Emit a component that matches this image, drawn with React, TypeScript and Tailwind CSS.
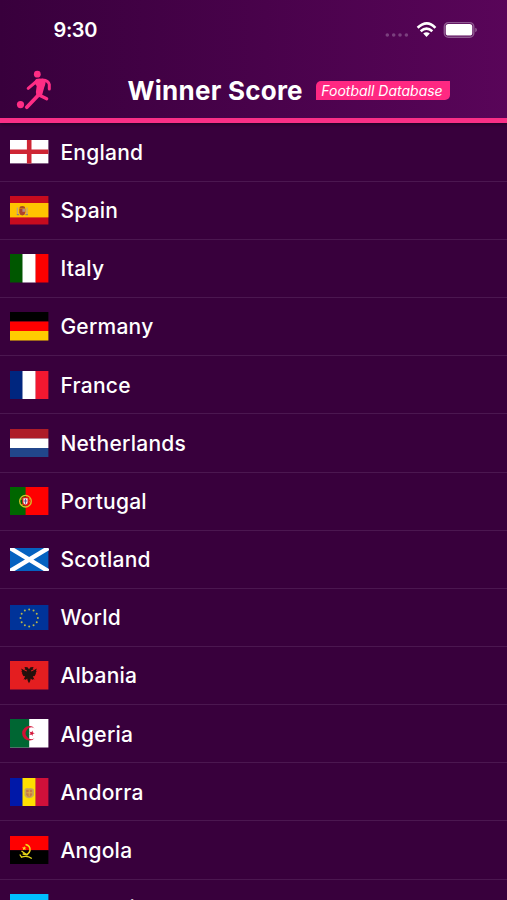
import React from 'react';

interface Country {
  name: string;
  flag: React.ReactNode;
  height?: number;
}

const HStripes = ({ colors }: { colors: string[] }) => (
  <>
    {colors.map((c, i) => (
      <rect key={i} x="0" y={(i * 28.5) / colors.length} width="38.4" height={28.5 / colors.length + 0.02} fill={c} />
    ))}
  </>
);

const VStripes = ({ colors }: { colors: string[] }) => (
  <>
    <rect x="0" y="0" width="12.9" height="28.5" fill={colors[0]} />
    <rect x="12.5" y="0" width="13.3" height="28.5" fill={colors[1]} />
    <rect x="25.6" y="0" width="12.8" height="28.5" fill={colors[2]} />
  </>
);

// 12 stars around the centre of the EU flag
const stars = Array.from({ length: 12 }, (_, i) => {
  const a = (i * Math.PI) / 6;
  return { x: 19.2 + Math.sin(a) * 8.7, y: 12.9 - Math.cos(a) * 8.5 };
});

const countries: Country[] = [
  {
    name: 'England',
    height: 23.4,
    flag: (
      <>
        <rect width="38.4" height="23.4" fill="#fff" />
        <path d="M19.2 0V23.4M0 11.8H38.4" stroke="#ce2634" strokeWidth="4.6" />
      </>
    ),
  },
  {
    name: 'Spain',
    flag: (
      <>
        <rect width="38.4" height="28.5" fill="#c60b1e" />
        <rect y="7" width="38.4" height="14.4" fill="#ffc400" />
        <path d="M7.4 11.5v7.2M17 11.5v7.2" stroke="#c3a47c" strokeWidth="1.3" />
        <path d="M6.8 18.7h2.4M15.4 18.7H18" stroke="#777a88" strokeWidth="1" />
        <path d="M9.3 12.5h6v4.3q-.4 2.4-3 2.7-2.6-.3-3-2.7z" fill="#ad432e" />
        <path d="M12.4 12.8h2.9v3h-2.9z" fill="#b78b83" />
        <path d="M9.5 12.2q0-2.2 2.8-2.2t2.8 2.2z" fill="#a64b22" />
      </>
    ),
  },
  { name: 'Italy', flag: <VStripes colors={['#005700', '#fff', '#fc0000']} /> },
  { name: 'Germany', flag: <HStripes colors={['#000', '#f00', '#fc0']} /> },
  { name: 'France', flag: <VStripes colors={['#00267f', '#fff', '#f31830']} /> },
  { name: 'Netherlands', flag: <HStripes colors={['#ae1c28', '#fff', '#21468b']} /> },
  {
    name: 'Portugal',
    flag: (
      <>
        <rect width="38.4" height="28.5" fill="#f00" />
        <rect width="15.6" height="28.5" fill="#060" />
        <circle cx="15.5" cy="14.2" r="5.8" fill="none" stroke="#d8c32a" strokeWidth="1.3" />
        <path d="M10 12.5q6-3 11 4M10.5 17.5q6 1 9.5-6.5" fill="none" stroke="#c8ae22" strokeWidth=".8" />
        <path d="M12.2 10.3h6.6v5q0 3.5-3.3 3.5t-3.3-3.5z" fill="#e01818" />
        <path d="M13.4 11.2h4.2v4q0 2.3-2.1 2.3t-2.1-2.3z" fill="#f4e6e6" />
        <path d="M15.5 11.8v5M14 14h3" stroke="#4a5599" strokeWidth=".9" />
      </>
    ),
  },
  {
    name: 'Scotland',
    height: 23.2,
    flag: (
      <>
        <rect width="38.4" height="23.2" fill="#0562c0" />
        <path d="M0 0L38.4 23.2M38.4 0L0 23.2" stroke="#fff" strokeWidth="4.4" />
      </>
    ),
  },
  {
    name: 'World',
    height: 25.7,
    flag: (
      <>
        <rect width="38.4" height="25.7" fill="#039" />
        {stars.map((s, i) => (
          <circle key={i} cx={s.x} cy={s.y} r="1" fill="#b9b64a" />
        ))}
      </>
    ),
  },
  {
    name: 'Albania',
    flag: (
      <>
        <rect width="38.4" height="28.5" fill="#e41e20" />
        <path
          d="M19 8.2L17.5 6.2 14.2 6 15.3 7.3 14.4 8.3 17 9.5 16.6 10.5 11.2 7.4 12 10 11.3 10.3 12.5 12.2 11.8 12.8 13.3 14.2 12.8 15 15.2 15.3 13.5 18.8 15 18 15.5 19 17.2 17.5 17.8 20 19 22.3 20.2 20 20.8 17.5 22.5 19 23 18 24.5 18.8 22.8 15.3 25.2 15 24.7 14.2 26.2 12.8 25.5 12.2 26.7 10.3 26 10 26.8 7.4 21.4 10.5 21 9.5 23.6 8.3 22.7 7.3 23.8 6 20.5 6.2z"
          fill="#24100c"
        />
      </>
    ),
  },
  {
    name: 'Algeria',
    flag: (
      <>
        <rect width="38.4" height="28.5" fill="#fff" />
        <rect width="19.2" height="28.5" fill="#006633" />
        <path d="M24.6 9.4A7.2 7.2 0 1 0 24.6 19.2A5.8 5.8 0 1 1 24.6 9.4z" fill="#d21034" />
        <path
          d="M24.8 14.3L22.7 15 22.7 17 21.4 15.4 19.3 16.1 20.6 14.3 19.3 12.5 21.4 13.2 22.7 11.6 22.7 13.6z"
          fill="#d21034"
        />
      </>
    ),
  },
  {
    name: 'Andorra',
    flag: (
      <>
        <VStripes colors={['#0018a8', '#fedf00', '#d0103a']} />
        <path d="M14.5 11.5q1.5-2 4.5-1.2 3-1 5 1.2v6q-1.5 2.5-5 2.7-3.5-.2-4.5-2.7z" fill="#c6aa5a" />
        <path d="M16.2 11.7h6v4.8q-.5 2.2-3 2.5-2.5-.3-3-2.5z" fill="#c97746" />
        <path d="M19.2 12v6.5M16.4 14.8h5.6" stroke="#e0b33e" strokeWidth="1" />
      </>
    ),
  },
  {
    name: 'Angola',
    flag: (
      <>
        <HStripes colors={['#f00', '#000']} />
        <path d="M15.5 8.5Q20.5 9.5 20 14.5Q18.5 20.3 12.7 17.8" fill="none" stroke="#f0dc18" strokeWidth="1.5" />
        <path d="M9.8 18.5L11.5 21.2Q17 19 21.8 22.5M11.5 15L17.5 19.2" fill="none" stroke="#e5d91a" strokeWidth="1.3" />
        <path d="M14.2 10l.6 1.5 1.6.1-1.2 1 .4 1.6-1.4-.9-1.4.9.4-1.6-1.2-1 1.6-.1z" fill="#ffdc20" />
      </>
    ),
  },
  { name: 'Argentina', flag: <HStripes colors={['#00bfff', '#fff', '#00bfff']} /> },
];

const Flag = ({ country }: { country: Country }) => {
  const h = country.height ?? 28.5;
  return (
    <svg className="w-[38.4px] shrink-0" style={{ height: h }} viewBox={`0 0 38.4 ${h}`} preserveAspectRatio="none">
      {country.flag}
    </svg>
  );
};

const Player = () => (
  <svg className="w-[36px] h-[40px]" viewBox="0 0 36 40" fill="none" stroke="#ff2d85" strokeLinecap="round" strokeLinejoin="round">
    <circle cx="21.3" cy="4.2" r="3.4" fill="#ff2d85" stroke="none" />
    <circle cx="4.5" cy="34.6" r="3.6" fill="#ff2d85" stroke="none" />
    <path d="M21.5 10.5L12.2 18.3" strokeWidth="3" />
    <path d="M26.5 10Q32.5 10.5 33.3 14.5V19" strokeWidth="3" />
    <path d="M20 9Q24 7.8 29 9.5Q30.5 12 28.2 17.5L26.3 24.5Q24.5 28 20.5 26Q19.3 22 20.7 16L18 12.5z" fill="#ff2d85" stroke="none" />
    <path d="M22.5 25L10.8 37.2" strokeWidth="3.8" />
    <path d="M23.5 25.2L30.7 28.8" strokeWidth="3.2" />
  </svg>
);

const StatusBar = () => (
  <div className="flex h-[60px] items-center justify-between pl-[53.5px] pr-[29px]">
    <span className="text-[20px] leading-none font-semibold tracking-[-0.4px]">9:30</span>
    <div className="flex items-center">
      <svg className="w-[24px] h-[20px]" viewBox="0 0 24 20" fill="#7b407e">
        <circle cx="2.3" cy="15" r="1.8" />
        <circle cx="8.7" cy="15" r="1.8" />
        <circle cx="15" cy="15" r="1.8" />
        <circle cx="21.4" cy="15" r="1.8" />
      </svg>
      <svg className="ml-[7px] w-[22px] h-[20px]" viewBox="0 0 22 20" fill="none" stroke="#fff" strokeWidth="2.6">
        <path d="M1.6 7.8Q11 -1 19.4 7.8" />
        <path d="M4.7 11.3Q10.5 6 16.3 11.3" />
        <path d="M7.2 13.6Q10.5 11 13.8 13.6L10.5 16.9z" fill="#fff" stroke="none" />
      </svg>
      <svg className="ml-[5px] w-[35px] h-[20px]" viewBox="0 0 35 20">
        <rect x="1.3" y="2.6" width="29.5" height="14.6" rx="4.2" fill="none" stroke="#8e5990" strokeWidth="1.4" />
        <rect x="2.7" y="4" width="26.6" height="11.6" rx="2.6" fill="#fff" />
        <path d="M32.2 7.8v4.4q1.8-.6 1.8-2.2t-1.8-2.2z" fill="#8e5990" />
      </svg>
    </div>
  </div>
);

const Header = () => (
  <header className="h-[123px] border-b-[5px] border-[#f92f86] bg-linear-to-r from-[#38003c] to-[#590559] shadow-[0_1px_4px_#1c0020]">
    <StatusBar />
    <div className="flex h-[60px] items-center pl-[16px]">
      <Player />
      <h1 className="ml-[75.5px] w-[176px] pt-[1px] text-[26px] leading-[60px] font-bold tracking-[0.25px] whitespace-nowrap">Winner Score</h1>
      <span className="ml-[12.5px] flex h-[19px] w-[134px] items-center justify-center rounded-tl-[5px] rounded-br-[5px] bg-[#ff2882] pr-[2px] text-[14px] whitespace-nowrap italic">
        Football Database
      </span>
    </div>
  </header>
);

export default function App() {
  return (
    <div className="h-[900px] w-[507px] overflow-hidden bg-[#38003c] font-['Inter',sans-serif] text-white">
      <Header />
      <ul className="pt-[0.6px]">
        {countries.map((country) => (
          <li key={country.name} className="flex h-[58.17px] items-center border-b border-[#4b1750] pl-[10.3px]">
            <Flag country={country} />
            <span className="ml-[11.7px] pt-[0.6px] text-[21px] leading-none font-medium tracking-[0.25px]">{country.name}</span>
          </li>
        ))}
      </ul>
    </div>
  );
}
